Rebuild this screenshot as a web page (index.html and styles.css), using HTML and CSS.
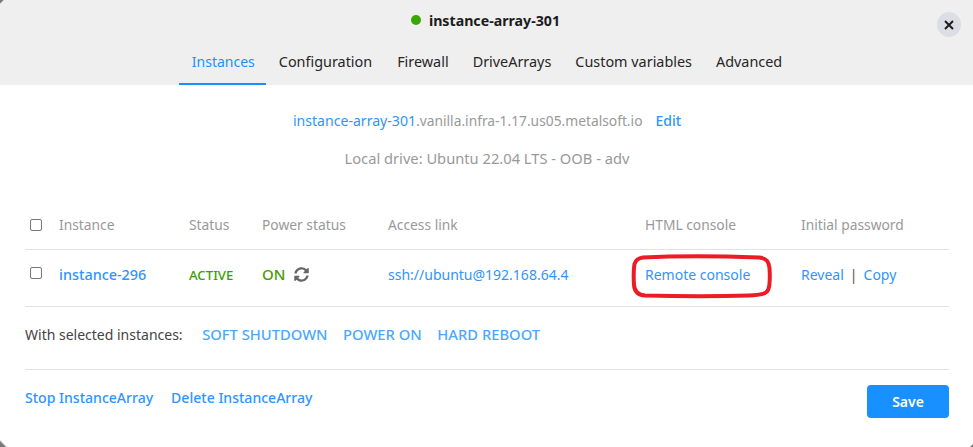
FILE: index.html
```html
<!DOCTYPE html>
<html lang="en">
<head>
<meta charset="utf-8">
<title>instance-array-301</title>
<link rel="stylesheet" href="styles.css">
</head>
<body>
<div class="modal">
  <span class="corner corner-tl"></span>
  <span class="corner corner-bl"></span>
  <span class="corner corner-br"></span>
  <header class="head">
    <div class="title-row">
      <span class="dot"></span>
      <h1 class="title">instance-array-301</h1>
    </div>
    <button class="close" aria-label="Close">
      <svg viewBox="0 0 10 10" width="10" height="10"><path d="M1 1l8 8M9 1l-8 8" stroke="#1a1a1a" stroke-width="1.9" fill="none"/></svg>
    </button>
    <nav class="tabs">
      <a class="tab active">Instances</a>
      <a class="tab tab-wide">Configuration</a>
      <a class="tab">Firewall</a>
      <a class="tab">DriveArrays</a>
      <a class="tab">Custom variables</a>
      <a class="tab">Advanced</a>
    </nav>
  </header>
  <main class="body">
    <p class="host"><a class="link host-name">instance-array-301</a>.vanilla.infra-1.17.us05.metalsoft.io<a class="link edit">Edit</a></p>
    <p class="drive">Local drive: Ubuntu 22.04 LTS - OOB - adv</p>
    <div class="table">
      <div class="row row-head">
        <span class="c-check"><span class="check"></span></span>
        <span>Instance</span>
        <span>Status</span>
        <span>Power status</span>
        <span>Access link</span>
        <span>HTML console</span>
        <span>Initial password</span>
      </div>
      <div class="row row-body">
        <span class="c-check"><span class="check"></span></span>
        <a class="link name">instance-296</a>
        <span class="status">ACTIVE</span>
        <span class="power">ON
          <svg class="sync" viewBox="0 0 512 512" width="15" height="15"><path fill="#666" d="M370.7 133.3C339.5 104 298.9 88 255.8 88c-77.5.1-144.3 53.2-162.8 126.9-1.3 5.4-6.1 9.2-11.7 9.2H24.1c-7.5 0-13.2-6.8-11.8-14.2C33.9 94.9 134.8 8 256 8c66.4 0 126.8 26.1 171.3 68.7L463 41C478.1 25.9 504 36.6 504 57.9V192c0 13.3-10.7 24-24 24H345.9c-21.4 0-32.1-25.9-17-41l41.8-41.7zM32 296h134.1c21.4 0 32.1 25.9 17 41l-41.8 41.8c31.3 29.3 71.8 45.3 114.9 45.2 77.4-.1 144.3-53.1 162.8-126.8 1.3-5.4 6.1-9.2 11.7-9.2h57.3c7.5 0 13.2 6.8 11.8 14.2C478.1 417.1 377.2 504 256 504c-66.4 0-126.8-26.1-171.3-68.7L49 471C33.9 486.1 8 475.4 8 454.1V320c0-13.3 10.7-24 24-24z"/></svg>
        </span>
        <a class="link">ssh://ubuntu@192.168.64.4</a>
        <a class="link console">Remote console</a>
        <span class="pw"><a class="link">Reveal</a><span class="sep">|</span><a class="link">Copy</a></span>
      </div>
      <svg class="mark" viewBox="0 0 142 45" width="142" height="45"><path d="M12 3.500C40 2 90 2 128 3.500 135 4 138 7 138.500 14 139 22 139 30 137.500 35 136 40 130 41 118 41.500 88 42.500 50 42.500 14 41.500 7 41 3.500 38 3 31 2.500 22 2.500 15 3.500 10 5 5 8 4 12 3.500Z" fill="none" stroke="#ed1c24" stroke-width="4"/></svg>
    </div>
    <div class="bulk">
      <span class="bulk-label">With selected instances:</span>
      <a class="link">SOFT SHUTDOWN</a>
      <a class="link">POWER ON</a>
      <a class="link">HARD REBOOT</a>
    </div>
    <div class="foot">
      <a class="link strong">Stop InstanceArray</a>
      <a class="link strong">Delete InstanceArray</a>
      <button class="save">Save</button>
    </div>
  </main>
</div>
</body>
</html>
```
FILE: styles.css
```css
* { box-sizing: border-box; }
html, body { margin: 0; height: 100%; }
body { background: #fff; font-family: "Noto Sans", sans-serif; font-size: 14px; overflow: hidden; }
.modal { position: relative; width: 973px; height: 447px; background: #fff; display: flex; flex-direction: column; }
.corner { position: absolute; z-index: 2; }
.corner-tl { left: 0; top: 0; width: 4px; height: 4px; background: linear-gradient(135deg, #777 0, #777 35%, transparent 55%); }
.corner-bl { left: 0; bottom: 0; width: 7px; height: 7px; background: linear-gradient(45deg, #777 0, #777 35%, transparent 55%); }
.corner-br { right: 0; bottom: 0; width: 4px; height: 4px; background: linear-gradient(-45deg, #777 0, #777 25%, transparent 50%); }
.head { background: #efefef; height: 85px; display: flex; flex-direction: column; align-items: center; position: relative; }
.title-row { height: 42px; display: flex; align-items: center; padding-bottom: 1px; margin-right: 2px; }
.dot { width: 10px; height: 10px; border-radius: 50%; background: #38a800; margin-right: 8px; }
.title { font-size: 14.2px; font-weight: 700; color: #1c1c1c; margin: 0; }
.close { position: absolute; left: 937px; top: 12px; width: 24px; height: 25px; border: 0; border-radius: 50%; background: #dcdee5; padding: 0; display: flex; align-items: center; justify-content: center; }
.tabs { display: flex; gap: 0; height: 45px; margin-top: -1px; margin-left: 1px; }
.tab { display: flex; align-items: center; height: 45px; padding: 0 12px; color: #262626; font-size: 14.4px; border-bottom: 2px solid transparent; }
.tab.active { color: #1e90ff; border-bottom-color: #1890ff; font-size: 14px; padding: 0 11px 0 13px; margin: 0 1px 0 -1px; }
.tab-wide { padding-right: 13px; }
.body { flex: 1; padding: 0 24px 0 25px; display: flex; flex-direction: column; }
.link { color: #2f94ff; text-decoration: none; }
.host { margin: 26px 0 0; text-align: center; color: #999; line-height: 20px; font-size: 13.8px; }
.host-name { font-size: 14.1px; }
.edit { margin-left: 13px; font-weight: 500; font-size: 14px; }
.drive { margin: 17px 0 0; text-align: center; color: #999; line-height: 20px; font-size: 14.7px; }
.table { position: relative; margin-top: 32px; }
.row { display: grid; grid-template-columns: 34px 130px 73px 126px 257px 156px 1fr; align-items: center; border-bottom: 1px solid #e2e2e2; }
.row-head { height: 50px; color: #999; font-size: 13.8px; }
.row-body { height: 57px; padding-bottom: 7px; }
.c-check { display: flex; padding-left: 5px; }
.row-body .check { margin-bottom: 3px; }
.check { width: 12px; height: 12px; border: 1px solid #777; border-radius: 2px; background: #fff; }
.name { font-weight: 500; font-size: 14.4px; }
.status { color: #36a000; font-weight: 500; font-size: 13.2px; }
.power { color: #4a9c00; font-weight: 500; font-size: 15px; display: flex; align-items: center; gap: 9px; margin-top: -1px; }
.sync { display: block; }
.console { color: #2f94ff; }
.pw { display: flex; align-items: center; }
.sep { color: #555; margin: 0 6px; }
.mark { position: absolute; left: 606px; top: 54px; }
.bulk { display: flex; align-items: center; gap: 15.500px; height: 63px; padding-bottom: 8px; border-bottom: 1px solid #e2e2e2; }
.bulk-label { color: #444; margin-right: 4px; }
.bulk .link { color: #4aa8ff; font-weight: 500; font-size: 14.75px; }
.foot { display: flex; align-items: flex-start; gap: 18px; padding-top: 15px; }
.strong { font-weight: 500; font-size: 14.05px; color: #2f94ff; margin-top: 3px; line-height: 19px; }
.save { margin-left: auto; width: 82px; height: 33px; border: 0; border-radius: 4px; background: #1890ff; color: #fff; font: 600 14px "Noto Sans", sans-serif; }
```
